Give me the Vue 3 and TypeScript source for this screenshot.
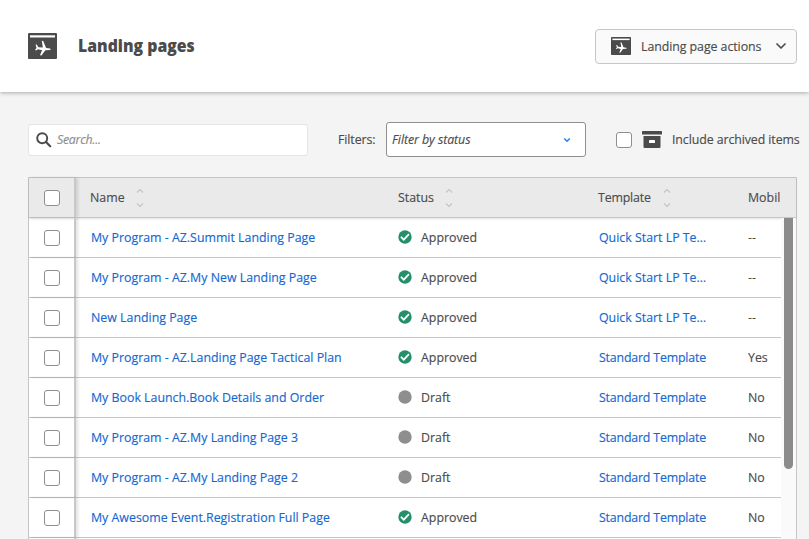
<script setup lang="ts">
interface Row {
  name: string
  approved: boolean
  template: string
  mobile: string
}

const quick = 'Quick Start LP Te…'
const standard = 'Standard Template'

const rows: Row[] = [
  { name: 'My Program - AZ.Summit Landing Page', approved: true, template: quick, mobile: '--' },
  { name: 'My Program - AZ.My New Landing Page', approved: true, template: quick, mobile: '--' },
  { name: 'New Landing Page', approved: true, template: quick, mobile: '--' },
  { name: 'My Program - AZ.Landing Page Tactical Plan', approved: true, template: standard, mobile: 'Yes' },
  { name: 'My Book Launch.Book Details and Order', approved: false, template: standard, mobile: 'No' },
  { name: 'My Program - AZ.My Landing Page 3', approved: false, template: standard, mobile: 'No' },
  { name: 'My Program - AZ.My Landing Page 2', approved: false, template: standard, mobile: 'No' },
  { name: 'My Awesome Event.Registration Full Page', approved: true, template: standard, mobile: 'No' },
]

const sortable = ['Name', 'Status', 'Template']
const plane = 'M7.6 11.4 8.7 11.6 10.4 14.2 14.8 14.4 13.8 7.7 15.2 7.9 18.1 14.9 22 15.6Q23.7 16.4 22 17L17.4 17.3 13.4 22.6 12 22.3 14.1 17.2 10 16.2 8 17.4 7 17 8.5 15Z'
</script>

<template>
  <div class="page">
    <header class="top">
      <svg class="logo" viewBox="0 0 29 26">
        <rect width="29" height="26" rx="1" fill="#4b4b4b" />
        <rect x="2" y="2.3" width="25" height="2.2" fill="#fff" />
        <path :d="plane" fill="#fff" />
      </svg>
      <h1>Landing pages</h1>
      <button class="actions">
        <svg class="small-logo" viewBox="0 0 29 26" preserveAspectRatio="none">
          <rect width="29" height="26" rx="1" fill="#4b4b4b" />
          <rect x="2" y="2.3" width="25" height="2.2" fill="#fff" />
          <path :d="plane" fill="#fff" />
        </svg>
        <span class="text actions-label">Landing page actions</span>
        <svg class="caret" viewBox="0 0 10 6"><path d="M1 1l4 4 4-4" fill="none" stroke="#4b4b4b" stroke-width="1.7" stroke-linecap="round" stroke-linejoin="round" /></svg>
      </button>
    </header>

    <div class="toolbar">
      <label class="search">
        <svg viewBox="0 0 16 16"><circle cx="6.2" cy="6.2" r="5" fill="none" stroke="#4b4b4b" stroke-width="1.9" /><path d="M10 10l4.2 4.2" stroke="#4b4b4b" stroke-width="2.2" stroke-linecap="round" /></svg>
        <span class="text hint">Search...</span>
      </label>
      <span class="text filters">Filters:</span>
      <div class="select">
        <span class="text">Filter by status</span>
        <svg viewBox="0 0 8 6"><path d="M1.2 1.5l2.8 2.7 2.8-2.7" fill="none" stroke="#2680eb" stroke-width="1.5" /></svg>
      </div>
      <i class="box archive-box"></i>
      <svg class="archive" viewBox="0 0 20 17">
        <rect width="20" height="3.6" rx=".5" fill="#4b4b4b" />
        <path d="M1.5 5h17v11q0 1-1 1h-15q-1 0-1-1z" fill="#4b4b4b" />
        <rect x="7" y="9" width="6" height="3" rx=".6" fill="#fff" />
      </svg>
      <span class="text include">Include archived items</span>
    </div>

    <section class="table">
      <div class="row head">
        <div class="check"><i class="box"></i></div>
        <div v-for="label in sortable" :key="label" class="cell" :class="label.toLowerCase()">
          <span class="text">{{ label }}</span>
          <svg class="sort" viewBox="0 0 8 20"><path d="M1 4.5l3-3 3 3M1 15.5l3 3 3-3" fill="none" stroke="#c4c4c4" stroke-width="1.1" /></svg>
        </div>
        <div class="cell mobile"><span class="text">Mobil</span></div>
      </div>
      <div class="body">
        <div class="rows">
          <div v-for="row in rows" :key="row.name" class="row">
            <div class="check"><i class="box"></i></div>
            <div class="cell name"><a class="text">{{ row.name }}</a></div>
            <div class="cell status">
              <svg class="dot" viewBox="0 0 14 14">
                <circle cx="7" cy="7" r="6.7" :fill="row.approved ? '#268e6c' : '#8e8e8e'" />
                <path v-if="row.approved" d="M3.4 7.3l2.4 2.4 4.7-5" fill="none" stroke="#fff" stroke-width="1.8" stroke-linecap="round" />
              </svg>
              <span class="text">{{ row.approved ? 'Approved' : 'Draft' }}</span>
            </div>
            <div class="cell template"><a class="text" :class="{ standard: row.template === standard }">{{ row.template }}</a></div>
            <div class="cell mobile"><span class="text">{{ row.mobile }}</span></div>
          </div>
          <div class="row"><div class="check"></div></div>
        </div>
        <div class="track"><div class="thumb"></div></div>
      </div>
    </section>
  </div>
</template>

<style>
body { margin: 0; overflow: hidden; }
</style>

<style scoped>
* { box-sizing: border-box; }
.page {
  width: 809px;
  height: 539px;
  overflow: hidden;
  background: #f4f4f4;
  color: #4b4b4b;
  font: 13.5px/20px "Open Sans", "Noto Sans", sans-serif;
  white-space: nowrap;
}
.text {
  display: block;
  flex: none;
  transform: scaleX(.916);
  transform-origin: 0 50%;
  -webkit-text-stroke: .15px currentColor;
}
.top {
  display: flex;
  align-items: center;
  height: 92px;
  padding: 0 12px 0 28px;
  background: #fff;
  box-shadow: 0 1px 4px rgba(0, 0, 0, .3);
}
.logo { width: 29px; height: 26px; }
h1 {
  margin: 0 0 0 21px;
  font-size: 17px;
  font-weight: 800;
  line-height: 24px;
  transform: scaleX(.93);
  transform-origin: 0 50%;
}
.actions {
  display: flex;
  align-items: center;
  width: 202px;
  height: 35px;
  margin-left: auto;
  padding: 0 10px 0 15px;
  border: 1px solid #c6c6c6;
  border-radius: 4px;
  background: #fafafa;
  color: inherit;
  font: inherit;
}
.actions-label { width: 125px; text-align: left; letter-spacing: -.07px; }
.small-logo { flex: none; width: 20px; height: 18px; margin-right: 10px; }
.caret { flex: none; width: 10px; height: 6px; margin-left: auto; }
.toolbar { display: flex; align-items: center; height: 37px; margin-top: 29px; padding: 0 0 0 28px; }
.toolbar .text { padding-bottom: 2px; }
.search {
  display: flex;
  flex: none;
  align-items: center;
  width: 280px;
  height: 32px;
  padding-left: 7px;
  border: 1px solid #e6e6e6;
  border-radius: 3px;
  background: #fff;
  color: #8e8e8e;
  font-style: italic;
}
.search svg { width: 16px; height: 16px; margin-right: 5px; }
.hint { letter-spacing: -.3px; }
.filters { width: 48px; margin-left: 30px; letter-spacing: -.1px; }
.select {
  display: flex;
  flex: none;
  align-items: center;
  justify-content: space-between;
  width: 200px;
  height: 35px;
  padding: 0 14px 0 5px;
  border: 1px solid #8e8e8e;
  border-radius: 3px;
  background: #fff;
  font-style: italic;
}
.select .text { letter-spacing: -.07px; }
.select svg { width: 8px; height: 6px; }
.box { width: 16px; height: 16px; border: 1px solid #8e8e8e; border-radius: 3px; background: #fff; }
.archive-box { flex: none; margin-left: 30px; }
.archive { flex: none; width: 20px; height: 17px; margin: 0 10px; }
.include { letter-spacing: -.1px; }
.table {
  width: 769px;
  height: 363px;
  margin: 19px 0 0 28px;
  border: 1px solid #c6c6c6;
  border-bottom: 0;
  background: #fff;
}
.row { display: flex; height: 40px; border-bottom: 1px solid #c6c6c6; }
.head { background: #eaeaea; box-shadow: 0 1px 2px rgba(0, 0, 0, .12); }
.check {
  display: flex;
  align-items: center;
  justify-content: center;
  width: 47px;
  padding-top: 1px;
  border-right: 2px solid #c8c8c8;
  box-shadow: 2px 0 3px rgba(0, 0, 0, .12);
}
.cell { display: flex; align-items: center; padding-bottom: 1px; }
.name { width: 307px; padding-left: 15px; }
.status { width: 200px; padding-left: 15px; }
.template { width: 150px; padding-left: 16px; }
.mobile { padding-left: 15px; }
.head .name { padding-left: 14px; }
.head .template { padding-left: 15px; }
.head .template .text { letter-spacing: -.2px; }
.sort { width: 8px; height: 20px; margin: 1px 0 0 8px; }
.body { display: flex; }
.rows { width: 752px; height: 323px; overflow: hidden; }
.track { width: 15px; padding-left: 3px; background: #fafafa; }
.thumb { width: 9px; height: 251px; border-radius: 0 0 5px 5px; background: #8b8b8b; }
a { color: #1268d2; }
.standard { letter-spacing: -.2px; }
.dot { width: 14px; height: 14px; margin-right: 9px; }
</style>
